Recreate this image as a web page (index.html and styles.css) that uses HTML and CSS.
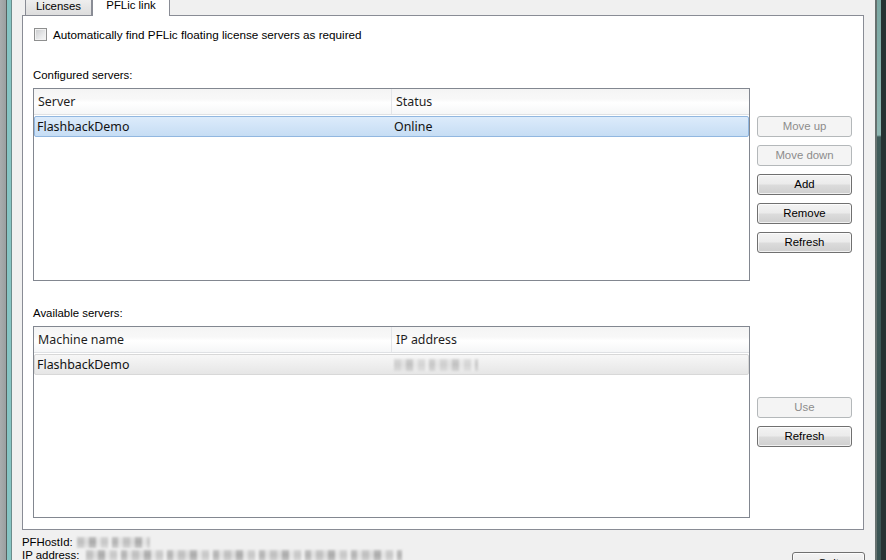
FILE: index.html
```html
<!DOCTYPE html>
<html>
<head>
<meta charset="utf-8">
<link rel="stylesheet" href="styles.css">
</head>
<body>
<div class="screen">
  <div class="frame-left">
    <span class="fl-gray"></span><span class="fl-dark"></span><span class="fl-teal"></span><span class="fl-edge"></span>
  </div>
  <div class="dialog">
    <div class="tabs">
      <div class="tab">Licenses</div>
      <div class="tab active">PFLic link</div>
    </div>
    <div class="panel">
      <label class="check-row"><span class="checkbox"></span><span class="check-label">Automatically find PFLic floating license servers as required</span></label>
      <div class="group-label first">Configured servers:</div>
      <div class="section">
        <div class="list list-a">
          <div class="list-header"><div class="hcol c1">Server</div><div class="hcol c2">Status</div></div>
          <div class="row selected"><div class="col c1">FlashbackDemo</div><div class="col c2">Online</div></div>
        </div>
        <div class="buttons buttons-a">
          <button class="btn" disabled>Move up</button>
          <button class="btn" disabled>Move down</button>
          <button class="btn">Add</button>
          <button class="btn">Remove</button>
          <button class="btn">Refresh</button>
        </div>
      </div>
      <div class="group-label second">Available servers:</div>
      <div class="section">
        <div class="list list-b">
          <div class="list-header"><div class="hcol c1">Machine name</div><div class="hcol c2">IP address</div></div>
          <div class="row inactive"><div class="col c1">FlashbackDemo</div><div class="col c2"><span class="mosaic mosaic-ip"></span></div></div>
        </div>
        <div class="buttons buttons-b">
          <button class="btn" disabled>Use</button>
          <button class="btn">Refresh</button>
        </div>
      </div>
    </div>
    <div class="footer">
      <div class="info">
        <div class="info-line">PFHostId: <span class="mosaic mosaic-host"></span></div>
        <div class="info-line">IP address: <span class="mosaic mosaic-addr"></span></div>
      </div>
      <button class="btn quit">Quit</button>
    </div>
  </div>
  <div class="frame-right">
    <span class="fr-line"></span><span class="fr-teal"></span><span class="fr-dark"></span>
  </div>
</div>
</body>
</html>
```
FILE: styles.css
```css
html, body {
  margin: 0;
  padding: 0;
}
body {
  font-family: "Liberation Sans", Arial, sans-serif;
  font-size: 11.4px;
  color: #000;
  background: #f0f0f0;
}
.screen {
  display: flex;
  width: 886px;
  height: 560px;
  overflow: hidden;
}

/* window frame strips */
.frame-left {
  display: flex;
  width: 12px;
  flex: none;
}
.fl-gray { width: 6px; background: linear-gradient(90deg, #a9adae, #9a9fa0); }
.fl-dark { width: 1px; background: #56615f; }
.fl-teal { width: 4px; background: #86c4c3; }
.fl-edge { width: 1px; background: #6a8c8b; }

.frame-right {
  display: flex;
  width: 11px;
  flex: none;
}
.fr-line { width: 2px; background: #66716f; }
.fr-teal { width: 4px; background: linear-gradient(#7ba8a3 0, #8fb8b3 135px, #3f5b59 137px, #3a5453 100%); }
.fr-dark { width: 5px; background: #263232; }

.dialog {
  flex: 1;
  min-width: 0;
  background: #f0f0f0;
  padding: 0 11px 0 10px;
  display: flex;
  flex-direction: column;
}

/* tabs */
.tabs {
  display: flex;
  align-items: flex-end;
  height: 21px;
  margin-top: -6px;
  padding-left: 3px;
  flex: none;
}
.tab {
  box-sizing: border-box;
  height: 19px;
  width: 67px;
  border: 1px solid #898c95;
  border-bottom: none;
  border-radius: 3px 3px 0 0;
  background: linear-gradient(#f2f2f2, #e6e6e6 55%, #dddddd);
  text-align: center;
  line-height: 19px;
  color: #000;
}
.tab.active {
  position: relative;
  z-index: 1;
  height: 22px;
  width: 78px;
  margin-bottom: -1px;
  background: #fff;
  line-height: 21px;
}

/* panel */
.panel {
  box-sizing: border-box;
  width: 842px;
  height: 515px;
  border: 1px solid #898c95;
  background: #fff;
  padding: 12px 11px 11px 10px;
  flex: none;
}
.check-row {
  display: flex;
  align-items: center;
  height: 13px;
  margin-left: 1px;
}
.checkbox {
  box-sizing: border-box;
  width: 13px;
  height: 13px;
  border: 1px solid #8e8f8f;
  background: linear-gradient(135deg, #c8cacc, #e8e9ea 60%, #f7f7f7);
  box-shadow: inset 0 0 0 1px #f2f2f2;
  flex: none;
}
.check-label {
  margin-left: 6px;
  line-height: 13px;
  font-size: 11.7px;
}
.group-label {
  line-height: 14px;
  height: 14px;
  margin-left: 0;
}
.group-label.first { margin-top: 27px; }
.group-label.second { margin-top: 25px; }

.section {
  display: flex;
  margin-top: 6px;
  gap: 7px;
}
.list {
  box-sizing: border-box;
  width: 717px;
  border: 1px solid #828790;
  background: #fff;
  font-family: "Noto Sans", "Liberation Sans", sans-serif;
  font-size: 12.4px;
}
.list-a { height: 193px; }
.list-b { height: 192px; }

.list-header {
  display: flex;
  height: 26px;
  box-sizing: border-box;
  border-bottom: 1px solid #dfe1e4;
  background: linear-gradient(#f4f4f4, #f8f8f8 40%, #ffffff 55%, #f5f6f7);
  color: #1e1e1e;
}
.hcol {
  box-sizing: border-box;
  line-height: 25px;
  padding-left: 4px;
}
.hcol.c1 {
  width: 358px;
  border-right: 1px solid #e3e5e8;
}
.row {
  display: flex;
  box-sizing: border-box;
  height: 21px;
  margin-top: 1px;
  border: 1px solid transparent;
  border-radius: 2px;
  color: #111;
}
.row.selected {
  background: linear-gradient(#dcebfb, #c6ddf4);
  border-color: #91b7e0;
}
.row.inactive {
  background: linear-gradient(#f7f7f7, #e6e6e6);
  border-color: #d8d8d8;
}
.col {
  line-height: 19px;
}
.col.c1 {
  box-sizing: border-box;
  width: 357px;
  padding-left: 2px;
}
.col.c2 {
  padding-left: 2px;
  display: flex;
  align-items: center;
}

/* buttons */
.buttons {
  display: flex;
  flex-direction: column;
  gap: 8px;
}
.buttons-a { padding-top: 28px; }
.buttons-b { padding-top: 71px; }
.btn {
  box-sizing: border-box;
  width: 95px;
  height: 21px;
  margin: 0;
  padding: 0;
  border: 1px solid #707070;
  border-radius: 3px;
  background: linear-gradient(#f3f3f3, #ebebeb 48%, #dcdcdc 52%, #cfcfcf);
  box-shadow: inset 0 0 0 1px rgba(255,255,255,0.7);
  font-family: "Liberation Sans", Arial, sans-serif;
  font-size: 11.4px;
  color: #000;
  line-height: 19px;
  text-align: center;
}
.btn:disabled {
  border-color: #b4b8ba;
  background: #f4f4f4;
  box-shadow: none;
  color: #8c8c8c;
}

/* footer */
.footer {
  display: flex;
  justify-content: space-between;
  flex: none;
}
.info {
  padding-top: 6px;
}
.info-line {
  line-height: 13px;
  height: 13px;
  white-space: nowrap;
  display: flex;
  align-items: center;
}
.btn.quit {
  width: 73px;
  height: 23px;
  margin-top: 22px;
  margin-right: -1px;
  line-height: 21px;
}

/* redacted mosaic blocks */
.mosaic {
  display: inline-block;
  height: 11px;
  margin-left: 4px;
  filter: blur(0.8px);
  background:
    linear-gradient(rgba(255,255,255,0.25), rgba(255,255,255,0) 45%, rgba(255,255,255,0.35)),
    repeating-linear-gradient(90deg, #bdbdbd 0 7px, #d8d8d8 7px 12px, #a9a9a9 12px 19px, #e2e2e2 19px 24px, #c6c6c6 24px 31px, #ebebeb 31px 35px, #b2b2b2 35px 41px, #dedede 41px 46px);
}
.mosaic-host { width: 73px; }
.mosaic-addr { width: 316px; margin-left: 7px; }
.mosaic-ip {
  width: 84px;
  height: 12px;
  margin-left: 0;
  opacity: 0.65;
}
```
